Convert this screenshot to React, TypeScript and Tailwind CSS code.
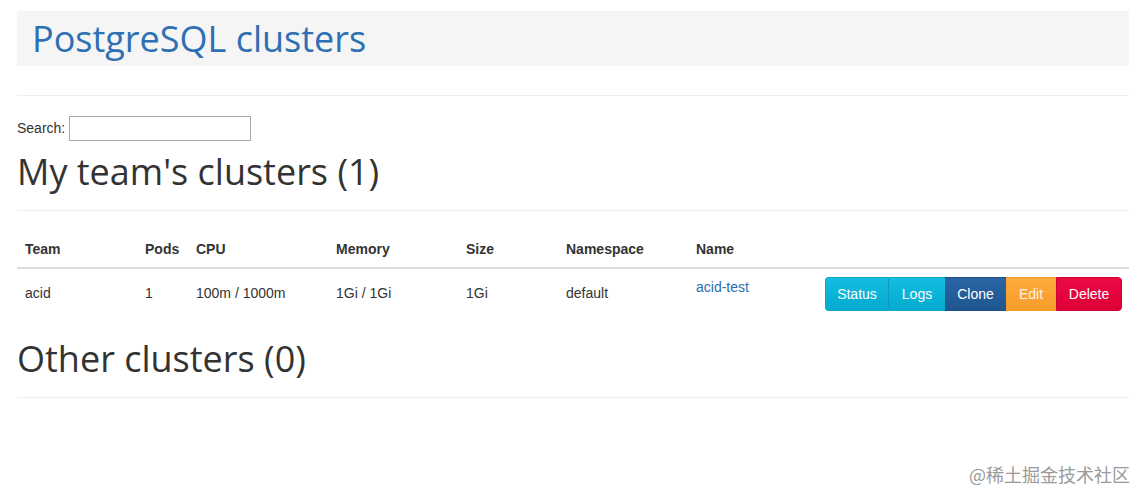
import React from 'react';

// Cluster list view – single team cluster plus empty "other" section
const sans = "font-['Liberation_Sans',Arial,sans-serif]";
const heading = "font-['Open_Sans','Noto_Sans',sans-serif]";

type Cluster = {
  team: string;
  pods: number;
  cpu: string;
  memory: string;
  size: string;
  namespace: string;
  name: string;
};

const clusters: Cluster[] = [
  { team: 'acid', pods: 1, cpu: '100m / 1000m', memory: '1Gi / 1Gi', size: '1Gi', namespace: 'default', name: 'acid-test' },
];

const columns = [
  { label: 'Team', w: 'w-[120px]' },
  { label: 'Pods', w: 'w-[51px]' },
  { label: 'CPU', w: 'w-[140px]' },
  { label: 'Memory', w: 'w-[130px]' },
  { label: 'Size', w: 'w-[100px]' },
  { label: 'Namespace', w: 'w-[130px]' },
  { label: 'Name', w: 'w-[129px]' },
];

function Actions() {
  return (
    <div className="inline-flex text-[14px] leading-[20px] text-white">
      <button className="h-[34px] w-[64px] rounded-l-[4px] border border-[#0aa7c9] border-r-[#0a9dbd] bg-gradient-to-b from-[#14bde0] to-[#02aacf]">Status</button>
      <button className="h-[34px] w-[56px] border-y border-[#0aa7c9] bg-gradient-to-b from-[#14bde0] to-[#02aacf]">Logs</button>
      <button className="h-[34px] w-[61px] border-y border-[#1d4f86] bg-gradient-to-b from-[#2a64a3] to-[#1f5692]">Clone</button>
      <button className="h-[34px] w-[50px] border-y border-[#f39a27] bg-gradient-to-b from-[#fcaa3c] to-[#f89d2a] text-[#fff3e0]">Edit</button>
      <button className="h-[34px] w-[66px] rounded-r-[4px] border border-[#cf0035] bg-gradient-to-b from-[#ec0a45] to-[#dd0036]">Delete</button>
    </div>
  );
}

export default function App() {
  return (
    <div className={`relative min-h-[502px] bg-white text-[#333] ${sans} text-[14px]`}>
      <div className="px-[17px] pt-[11px]">
        {/* page header */}
        <div className="h-[55px] bg-[#f5f5f5] pl-[15px] flex items-center">
          <h1 className={`${heading} text-[36px] leading-none text-[#2f6fb3]`}>PostgreSQL clusters</h1>
        </div>

        <hr className="mt-[29px] border-t border-[#eee]" />

        {/* search */}
        <div className="mt-[20px] flex items-center gap-[4px]">
          <label>Search:</label>
          <input className="h-[25px] w-[182px] border border-[#a9a9a9] px-1 outline-none" />
        </div>

        <h2 className={`${heading} mt-[11px] text-[36px] leading-[39.6px]`}>My team's clusters ({clusters.length})</h2>
        <hr className="mt-[18px] border-t border-[#eee]" />

        {/* cluster table */}
        <table className="mt-[20px] w-full table-fixed border-collapse">
          <colgroup>
            {columns.map((c) => (
              <col key={c.label} className={c.w} />
            ))}
            <col />
          </colgroup>
          <thead>
            <tr className="border-b-2 border-[#ddd]">
              {columns.map((c) => (
                <th key={c.label} className="px-2 py-2 text-left font-bold leading-[20px]">{c.label}</th>
              ))}
              <th />
            </tr>
          </thead>
          <tbody>
            {clusters.map((c) => (
              <tr key={c.name}>
                <td className="px-2 py-2 align-middle">{c.team}</td>
                <td className="px-2 py-2 align-middle">{c.pods}</td>
                <td className="px-2 py-2 align-middle">{c.cpu}</td>
                <td className="px-2 py-2 align-middle">{c.memory}</td>
                <td className="px-2 py-2 align-middle">{c.size}</td>
                <td className="px-2 py-2 align-middle">{c.namespace}</td>
                <td className="px-2 py-2 align-top leading-[20px]">
                  <a href="#" className="text-[#2a6db0]">{c.name}</a>
                </td>
                <td className="pl-2 pr-[7px] py-2 text-right align-middle">
                  <Actions />
                </td>
              </tr>
            ))}
          </tbody>
        </table>

        <h2 className={`${heading} mt-[20px] text-[36px] leading-[39.6px]`}>Other clusters (0)</h2>
        <hr className="mt-[19px] border-t border-[#eee]" />
      </div>

      {/* watermark */}
      <div className="absolute right-[16px] bottom-[14px] text-[18px] text-[#9a9a9a] font-['Noto_Sans_CJK_SC',sans-serif]">@稀土掘金技术社区</div>
    </div>
  );
}
